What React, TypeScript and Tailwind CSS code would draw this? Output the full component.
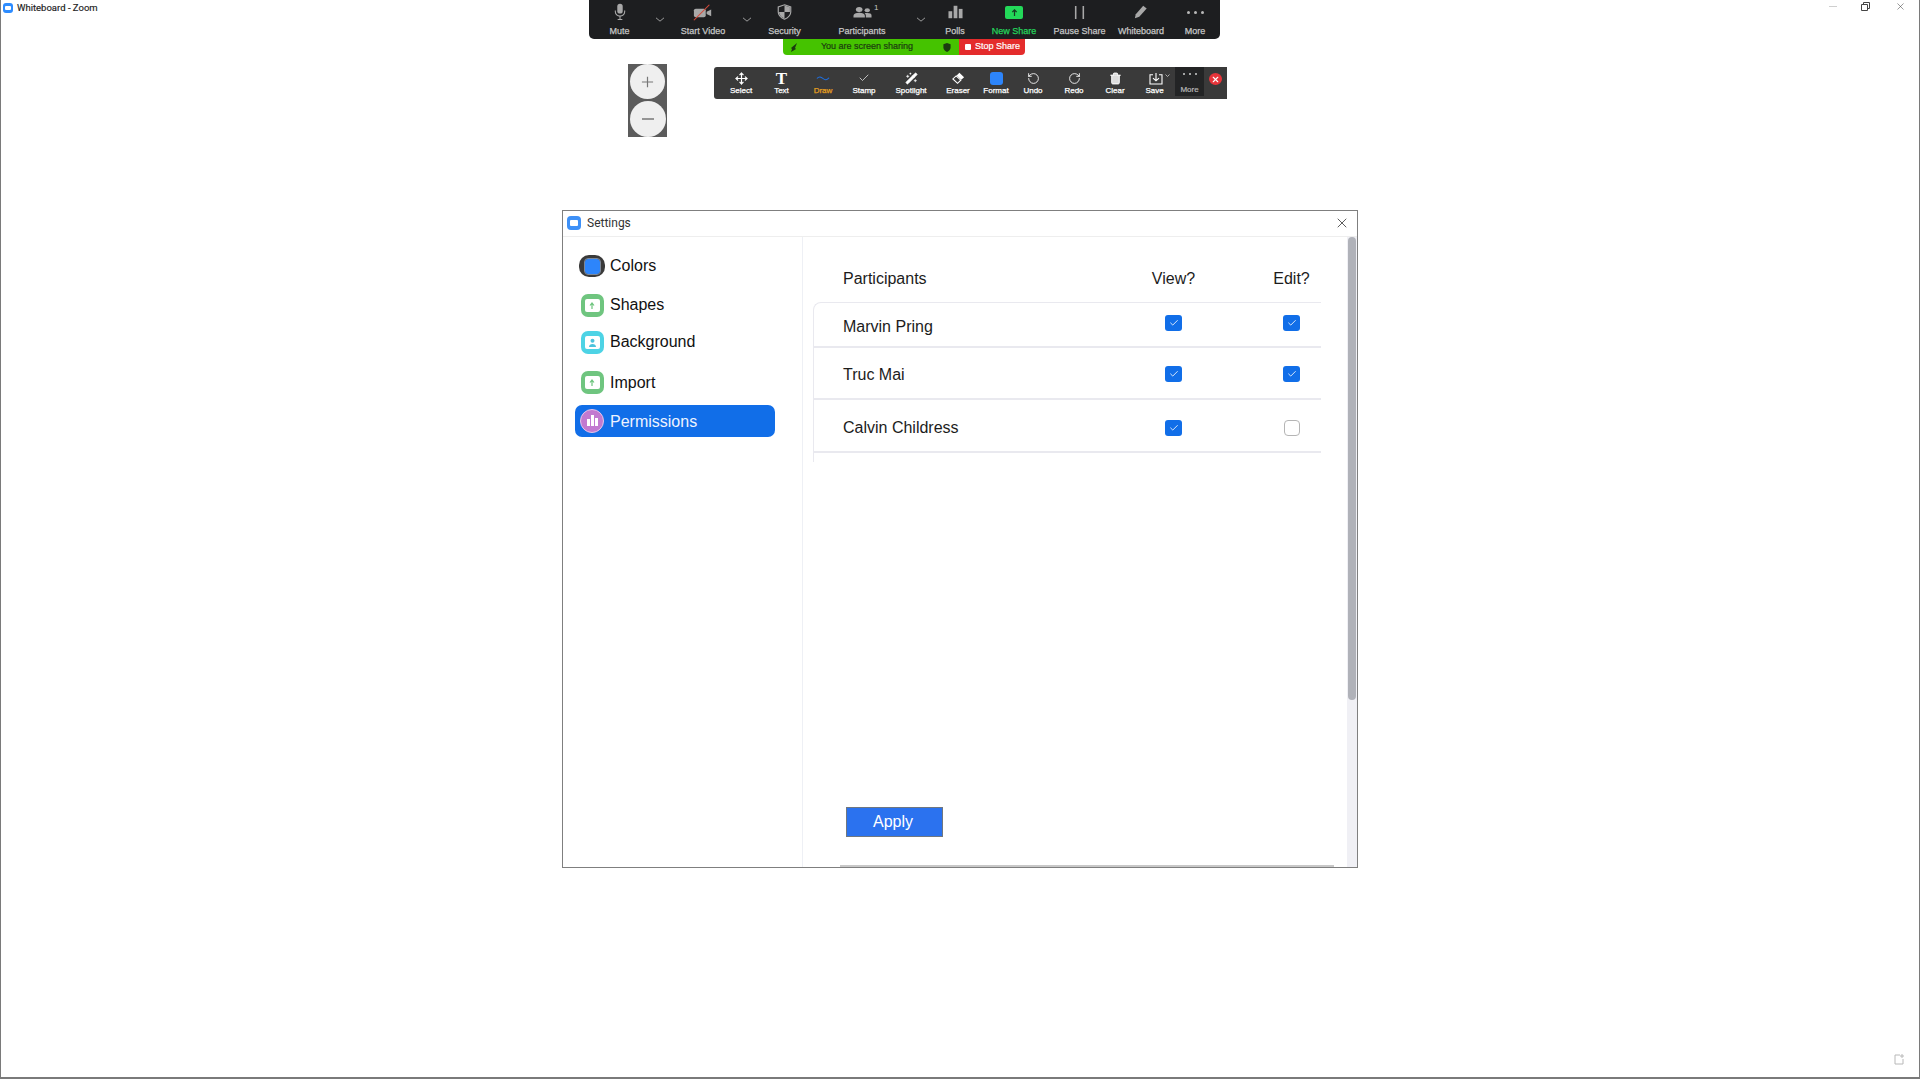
import React from "react";
import { Move, Check, RotateCcw, RotateCw, Trash2, WandSparkles, X } from "lucide-react";

const sans = "font-['Liberation_Sans',Arial,sans-serif]";
const gray = "#a8a8a8";

function Mic() {
  return (
    <svg width="14" height="18" viewBox="0 0 18 24" preserveAspectRatio="none">
      <rect x="5.500" y="1" width="7" height="13" rx="3.500" fill={gray} />
      <path d="M3 10v1.500a6 6 0 0 0 12 0V10M9 17.500V22M6 22h6" stroke={gray} strokeWidth="1.400" fill="none" />
    </svg>
  );
}
function Video() {
  return (
    <svg width="20" height="17" viewBox="0 0 22 22" preserveAspectRatio="none">
      <rect x="1" y="6" width="13" height="11" rx="2" fill={gray} />
      <path d="M15 10l5-3v9l-5-3z" fill={gray} />
      <path d="M1 21L18 1" stroke="#d64a3a" strokeWidth="1.300" />
    </svg>
  );
}
function Shield() {
  return (
    <svg width="15" height="16" viewBox="0 0 18 22" preserveAspectRatio="none">
      <path d="M9 1l7.500 3v7c0 5-3.500 8-7.500 10-4-2-7.500-5-7.500-10V4z" fill="none" stroke={gray} strokeWidth="1.400" />
      <path d="M9 2l6.500 2.600V11H9zM9 11v9c-3-1.600-6.500-4-6.500-9z" fill={gray} />
    </svg>
  );
}
function People() {
  return (
    <svg width="19" height="13" viewBox="0 0 20 18" preserveAspectRatio="none">
      <circle cx="6.500" cy="5" r="3.500" fill={gray} />
      <circle cx="15" cy="6" r="2.800" fill={gray} />
      <path d="M0.500 16v-2.500C.5 11 3 9.500 6.500 9.500s6 1.500 6 4V16z" fill={gray} />
      <path d="M13.500 16v-3c0-1.300-.6-2.300-1.300-3 .8-.3 1.700-.4 2.800-.4 2.800 0 4.500 1.200 4.500 3.200V16z" fill={gray} />
    </svg>
  );
}
function Bars() {
  return (
    <svg width="15" height="14" viewBox="0 0 16 18" preserveAspectRatio="none">
      <rect x="0.500" y="8" width="4" height="9" fill={gray} />
      <rect x="6" y="1" width="4" height="16" fill={gray} />
      <rect x="11.500" y="5" width="4" height="12" fill={gray} />
    </svg>
  );
}
function NewShare() {
  return (
    <div className="w-[18px] h-[13px] rounded-[2px] bg-[#23d959] flex items-center justify-center">
      <svg width="7" height="7" viewBox="0 0 8 9" preserveAspectRatio="none">
        <path d="M4 9V2M1.500 4L4 1l2.500 3" stroke="#173c22" strokeWidth="1.400" fill="none" />
      </svg>
    </div>
  );
}
function Pause() {
  return (
    <svg width="11" height="13" viewBox="0 0 12 16" preserveAspectRatio="none">
      <rect x="1" y="0" width="1.700" height="16" fill={gray} />
      <rect x="9.300" y="0" width="1.700" height="16" fill={gray} />
    </svg>
  );
}
function Pencil() {
  return (
    <svg width="14" height="14" viewBox="0 0 16 18" preserveAspectRatio="none">
      <path d="M10.500 1l4 3.500L6 15l-5 2 1-5z" fill={gray} />
    </svg>
  );
}
function Dots({ color = "#b8b8b8", size = 3 }: { color?: string; size?: number }) {
  return (
    <div className="flex gap-[4px]">
      {[0, 1, 2].map((i) => (
        <div key={i} className="rounded-full" style={{ width: size, height: size, background: color }} />
      ))}
    </div>
  );
}
function Chevron() {
  return (
    <svg width="10" height="5" viewBox="0 0 10 6" preserveAspectRatio="none">
      <path d="M1 1l4 4 4-4" stroke={gray} strokeWidth="1" fill="none" />
    </svg>
  );
}

function TopItem({ w, label, icon, green }: { w: string; label: string; icon: React.ReactNode; green?: boolean }) {
  return (
    <div className={`${w} h-full flex flex-col items-center`}>
      <div className="h-[25px] flex items-center justify-center pb-[1px]">{icon}</div>
      <div
        className={`${sans} text-[9px] leading-[12px] whitespace-nowrap [-webkit-text-stroke:0.25px] ${
          green ? "text-[#25d45c]" : "text-[#c6c6c6]"
        }`}
      >
        {label}
      </div>
    </div>
  );
}
function TopChevron({ w }: { w: string }) {
  return <div className={`${w} h-full flex items-center justify-center`}><Chevron /></div>;
}

function WbItem({ w, label, icon, orange }: { w: string; label: string; icon: React.ReactNode; orange?: boolean }) {
  return (
    <div className={`${w} h-full flex flex-col items-center`}>
      <div className="h-[19px] w-full flex items-center justify-center pt-[3px]">{icon}</div>
      <div
        className={`${sans} text-[8px] leading-[10px] whitespace-nowrap [-webkit-text-stroke:0.25px] ${
          orange ? "text-[#e8a020]" : "text-white"
        }`}
      >
        {label}
      </div>
    </div>
  );
}

function InnerIcon({ bg, children }: { bg: string; children: React.ReactNode }) {
  return (
    <div className={`w-[23px] h-[23px] rounded-[7px] ${bg} flex items-center justify-center`}>
      <div className="w-[15px] h-[13px] rounded-[2px] bg-white flex items-center justify-center">{children}</div>
    </div>
  );
}
const UpArrow = () => (
  <svg width="6" height="7" viewBox="0 0 6 7">
    <path d="M3 7V2M1 3.500L3 1l2 2.500" stroke="#6cc47c" strokeWidth="1.200" fill="none" />
  </svg>
);

const CheckBox = ({ on }: { on: boolean }) =>
  on ? (
    <div className="w-[17px] h-[16px] rounded-[3px] bg-[#116ee8] flex items-center justify-center">
      <Check size={10} color="white" strokeWidth={2} />
    </div>
  ) : (
    <div className="w-[16px] h-[16px] rounded-[4px] border border-[#b5b5b5] bg-white" />
  );

export default function App() {
  const side = [
    {
      label: "Colors",
      cls: "mt-[13px]",
      txt: "",
      icon: (
        <div className="w-[28px] h-[22px] rounded-[10px] bg-[#3a3a3a] flex items-center justify-center">
          <div className="w-[15px] h-[15px] rounded-[3px] bg-[#2d85fb] outline outline-[#7c8798]" />
        </div>
      ),
    },
    { label: "Shapes", cls: "mt-[7px]", txt: "", icon: <InnerIcon bg="bg-[#6fc57f]"><UpArrow /></InnerIcon> },
    {
      label: "Background",
      cls: "mt-[5px]",
      txt: "",
      icon: (
        <InnerIcon bg="bg-[#4dd3e5]">
          <svg width="9" height="9" viewBox="0 0 9 9">
            <circle cx="4.500" cy="2.800" r="2" fill="#4dc3dc" />
            <path d="M1 9c0-2 1.500-3 3.500-3S8 7 8 9z" fill="#4dc3dc" />
          </svg>
        </InnerIcon>
      ),
    },
    { label: "Import", cls: "mt-[8px]", txt: "pt-[1px]", icon: <InnerIcon bg="bg-[#6fc57f]"><UpArrow /></InnerIcon> },
    {
      label: "Permissions",
      cls: "mt-[7px] bg-[#116ee8] text-[#eef3ff]",
      txt: "pt-[1px]",
      icon: (
        <div className="w-[24px] h-[24px] rounded-full bg-[#c27ad0] border border-[#e5c6ea] flex items-end justify-center gap-[1px] pb-[6px]">
          <div className="w-[3px] h-[7px] bg-white" />
          <div className="w-[3px] h-[11px] bg-white" />
          <div className="w-[3px] h-[8px] bg-white" />
        </div>
      ),
    },
  ];
  const rows = [
    { name: "Marvin Pring", view: true, edit: true, h: "h-[45px]", box: "pb-[3px]", txt: "pt-[4px]" },
    { name: "Truc Mai", view: true, edit: true, h: "h-[52px]", box: "pt-[2px]", txt: "pt-[3px]" },
    { name: "Calvin Childress", view: true, edit: false, h: "h-[53px]", box: "pt-[5px]", txt: "pt-[4px]" },
  ];

  return (
    <div className="relative w-[1920px] h-[1079px] bg-white border-l border-r border-b-2 border-[#7a7a7a] overflow-hidden">
      {/* app title bar */}
      <div className="flex items-center h-[15px] pl-[2px]">
        <div className="w-[10px] h-[10px] rounded-[3px] bg-[#2d8cff] flex items-center justify-center">
          <div className="w-[6px] h-[4px] bg-white rounded-[1px]" />
        </div>
        <span className="ml-[4px] font-['Roboto',sans-serif] text-[9.5px] leading-[14px] text-[#222] [-webkit-text-stroke:0.15px]">Whiteboard - Zoom</span>
        <div className="ml-auto flex items-center text-[#333] pb-[2px]">
          <div className="w-[8px] h-px bg-[#cfcfcf]" />
          <svg className="ml-[24px]" width="9" height="9" viewBox="0 0 9 9">
            <path d="M2.500 2V.5h6v6H7M.5 2.500h6v6h-6z" stroke="#444" strokeWidth="1" fill="none" />
          </svg>
          <X className="ml-[25px] mr-[13px]" size={11} strokeWidth={1.200} color="#444" />
        </div>
      </div>

      {/* meeting controls */}
      <div className="absolute left-[588px] top-0 w-[631px] h-[39px] rounded-b-[5px] bg-[#1d1e20] flex">
        <TopItem w="w-[61px]" label="Mute" icon={<Mic />} />
        <TopChevron w="w-[20px]" />
        <TopItem w="w-[66px]" label="Start Video" icon={<Video />} />
        <TopChevron w="w-[22px]" />
        <TopItem w="w-[53px]" label="Security" icon={<Shield />} />
        <div className="w-[102px] h-full relative">
          <TopItem w="w-full" label="Participants" icon={<People />} />
          <span className={`${sans} absolute left-[63px] top-[3px] text-[8px] leading-[10px] text-[#c6c6c6]`}>1</span>
        </div>
        <TopChevron w="w-[16px]" />
        <TopItem w="w-[52px]" label="Polls" icon={<Bars />} />
        <TopItem w="w-[66px]" label="New Share" icon={<NewShare />} green />
        <TopItem w="w-[65px]" label="Pause Share" icon={<Pause />} />
        <TopItem w="w-[58px]" label="Whiteboard" icon={<Pencil />} />
        <TopItem w="w-[50px]" label="More" icon={<Dots />} />
      </div>

      {/* sharing banner */}
      <div className={`absolute left-[782px] top-[39px] h-[16px] flex ${sans} text-[9px] [-webkit-text-stroke:0.2px]`}>
        <div className="w-[176px] bg-[#45c300] rounded-bl-[4px] flex items-center text-[#1b3b10] pl-[7px] pr-[8px]">
          <svg width="8" height="9" viewBox="0 0 8 9">
            <path d="M7 0L1 5l1 1-1 3 5-3-1-1z" fill="#1b3b10" />
          </svg>
          <span className="flex-1 text-center pr-[7px]">You are screen sharing</span>
          <svg width="8" height="9" viewBox="0 0 8 10">
            <path d="M4 0l4 1.500v3.500c0 2.500-2 4-4 5-2-1-4-2.500-4-5V1.500z" fill="#1b3b10" />
          </svg>
        </div>
        <div className="w-[66px] bg-[#e42c2c] rounded-br-[4px] flex items-center text-white pl-[6px] gap-[4px]">
          <div className="w-[6px] h-[6px] bg-white rounded-[1px]" />
          <span>Stop Share</span>
        </div>
      </div>

      {/* zoom in / out */}
      <div className="absolute left-[627px] top-[64px] w-[39px] h-[73px] bg-[#5b5b5b] flex flex-col items-center justify-between">
        <div className="w-[35px] h-[35px] rounded-[50%] bg-[#efefef] flex items-center justify-center">
          <svg width="13" height="12" viewBox="0 0 14 14" preserveAspectRatio="none"><path d="M7 1v12M1 7h12" stroke="#777" strokeWidth="1.300" /></svg>
        </div>
        <div className="w-[36px] h-[36px] rounded-[50%] bg-[#efefef] flex items-center justify-center">
          <svg width="14" height="2" viewBox="0 0 14 2"><path d="M1 1h12" stroke="#777" strokeWidth="1.500" /></svg>
        </div>
      </div>

      {/* annotation toolbar */}
      <div className="absolute left-[713px] top-[67px] w-[513px] h-[32px] bg-[#3a3a3a] rounded-l-[3px] flex pl-[7px]">
        <WbItem w="w-[40px]" label="Select" icon={<Move size={13} color="white" strokeWidth={2.200} />} />
        <WbItem
          w="w-[41px]"
          label="Text"
          icon={<span className="font-['Liberation_Serif',serif] font-bold text-[17px] leading-[17px] text-white">T</span>}
        />
        <WbItem
          w="w-[42px]"
          label="Draw"
          orange
          icon={
            <svg width="14" height="5" viewBox="0 0 14 6" preserveAspectRatio="none">
              <path d="M1 3c2-3 4-2 6 0s4 2 6-1" stroke="#1f6fe0" strokeWidth="1.200" fill="none" />
            </svg>
          }
        />
        <WbItem w="w-[40px]" label="Stamp" icon={<Check size={12} color="#e8e8e8" strokeWidth={1.500} />} />
        <WbItem w="w-[54px]" label="Spotlight" icon={<WandSparkles size={13} color="white" fill="white" strokeWidth={1.500} />} />
        <WbItem
          w="w-[40px]"
          label="Eraser"
          icon={
            <svg width="14" height="13" viewBox="0 0 15 15" preserveAspectRatio="none">
              <path d="M9 1l5 5-3 3-5-5z" fill="white" />
              <path d="M5.500 4.500l5 5L7 13 2 8z" fill="none" stroke="white" strokeWidth="1.200" />
            </svg>
          }
        />
        <WbItem w="w-[36px]" label="Format" icon={<div className="w-[13px] h-[13px] rounded-[3px] bg-[#2d85fb]" />} />
        <WbItem w="w-[38px]" label="Undo" icon={<RotateCcw size={13} color="white" strokeWidth={1.600} />} />
        <WbItem w="w-[44px]" label="Redo" icon={<RotateCw size={13} color="white" strokeWidth={1.600} />} />
        <WbItem w="w-[38px]" label="Clear" icon={<Trash2 size={13} color="white" fill="#dddddd" strokeWidth={1.800} />} />
        <WbItem
          w="w-[41px]"
          label="Save"
          icon={
            <div className="flex items-start gap-[2px] pl-[9px]">
              <svg width="14" height="13" viewBox="0 0 14 14" preserveAspectRatio="none">
                <path d="M4 3H1v10h12V3h-3M7 1v8M4 6.500L7 9.500l3-3" stroke="white" strokeWidth="1.100" fill="none" />
              </svg>
              <svg width="5" height="3" viewBox="0 0 5 3" className="mt-[2px]">
                <path d="M.5.5l2 2 2-2" stroke="#ccc" strokeWidth=".8" fill="none" />
              </svg>
            </div>
          }
        />
        <div className="w-[29px] h-[29px] bg-[#232425] flex flex-col items-center">
          <div className="h-[14px] flex items-center"><Dots color="#cfcfcf" size={2} /></div>
          <span className={`${sans} text-[8px] leading-[10px] mt-[4px] text-[#b8b8b8] [-webkit-text-stroke:0.2px]`}>More</span>
        </div>
        <div className="flex-1 flex justify-center pt-[6px]">
          <div className="w-[13px] h-[12px] rounded-[50%] bg-[#e8343a] flex items-center justify-center">
            <X size={9} color="white" strokeWidth={3} />
          </div>
        </div>
      </div>

      {/* settings dialog */}
      <div className={`absolute left-[561px] top-[210px] w-[796px] h-[658px] bg-white border border-[#7f7f7f] flex flex-col ${sans}`}>
        <div className="h-[26px] shrink-0 border-b border-[#eeeeee] flex items-center pl-[4px] pr-[7px] pb-[1px]">
          <div className="w-[14px] h-[14px] rounded-[4px] bg-[#3d90f7] flex items-center justify-center">
            <div className="w-[8px] h-[6px] rounded-[1px] bg-white" />
          </div>
          <span className="ml-[6px] font-['Roboto',sans-serif] text-[12px] text-[#333]">Settings</span>
          <X className="ml-auto" size={16} strokeWidth={1.200} color="#333" />
        </div>
        <div className="flex-1 flex min-h-0">
          <div className="w-[240px] shrink-0 border-r border-[#eef0f5] pl-[12px] pr-[27px]">
            {side.map((s) => (
              <div
                key={s.label}
                className={`h-[32px] flex items-center pl-[4px] gap-[5px] rounded-[7px] text-[16px] text-[#111] ${s.cls}`}
              >
                <div className="w-[26px] flex justify-center shrink-0">{s.icon}</div>
                <span className={s.txt}>{s.label}</span>
              </div>
            ))}
          </div>
          <div className="flex-1 flex flex-col pl-[10px] text-[16px] text-[#1c1c1c]">
            <div className="h-[65px] shrink-0 w-[508px] grid grid-cols-[272px_177px_59px] items-start pt-[30px] leading-[24px]">
              <span className="pl-[30px]">Participants</span>
              <span className="text-center">View?</span>
              <span className="text-center">Edit?</span>
            </div>
            <div className="w-[508px] border-l border-t border-[#e9e9ef] rounded-tl-[8px] pb-[9px]">
              {rows.map((r) => (
                <div
                  key={r.name}
                  className={`grid grid-cols-[271px_177px_59px] items-center border-b-2 border-[#e9e9ef] ${r.h}`}
                >
                  <span className={`pl-[29px] ${r.txt}`}>{r.name}</span>
                  <div className={`flex justify-center ${r.box}`}><CheckBox on={r.view} /></div>
                  <div className={`flex justify-center ${r.box}`}><CheckBox on={r.edit} /></div>
                </div>
              ))}
            </div>
            <button className="mt-[345px] ml-[33px] w-[97px] h-[30px] shrink-0 bg-[#2b72ef] border border-[#6f7780] text-white pr-[3px]">
              Apply
            </button>
            <div className="mt-[28px] ml-[27px] w-[494px] h-[2px] shrink-0 bg-[#c8c8c8]" />
          </div>
          <div className="w-[10px] shrink-0 bg-[#f0f0f5]">
            <div className="h-[463px] w-[8px] mx-auto rounded-full bg-[#b0b2b9]" />
          </div>
        </div>
      </div>

      {/* expand corner */}
      <svg className="absolute right-[13px] bottom-[12px]" width="12" height="12" viewBox="0 0 12 12">
        <path d="M6 2H1v9h8V6M8 1v4M6 3h4" stroke="#b8b8b8" strokeWidth="1" fill="none" />
      </svg>
    </div>
  );
}
